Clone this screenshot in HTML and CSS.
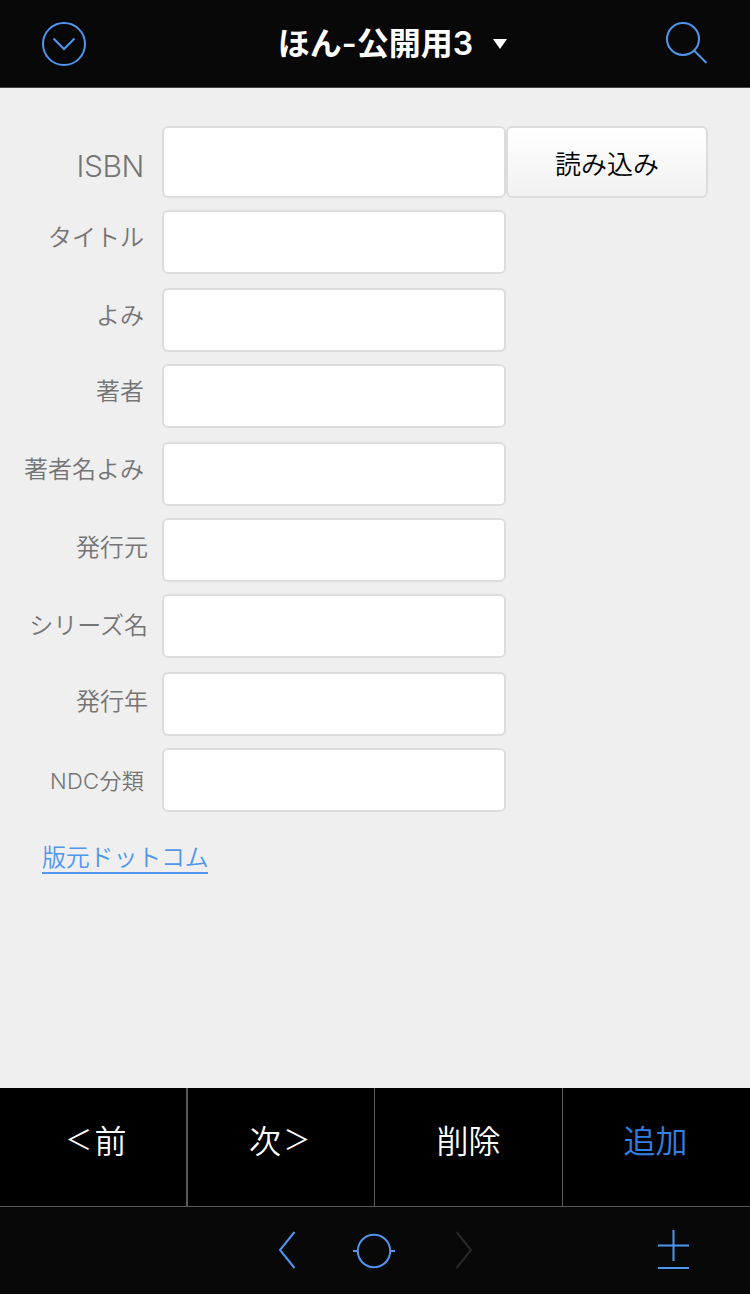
FILE: index.html
```
<!DOCTYPE html>
<html lang="ja">
<head>
    <meta charset="UTF-8">
    <meta name="viewport" content="width=device-width, initial-scale=1.0">
    <title>ほん-公開用3</title>
    <link rel="stylesheet" href="styles.css">
</head>
<body>
    <header class="header">
        <svg class="icon" width="44" height="44" viewBox="0 0 44 44">
            <circle cx="22" cy="22" r="21"/>
            <path d="M11.5 16.5 L22 27 L32.5 16.5"/>
        </svg>
        <h1 class="title">ほん-公開用3<span class="arrow"></span></h1>
        <svg class="icon" width="44" height="44" viewBox="0 0 44 44">
            <circle cx="19" cy="17" r="16"/>
            <path d="M30 28.5 L42.5 41"/>
        </svg>
    </header>

    <main class="form">
        <div class="row isbn">
            <label class="label" for="isbn">ISBN</label>
            <input type="text" id="isbn" class="field">
            <button class="load">読み込み</button>
        </div>
        <div class="row">
            <label class="label" for="bookTitle">タイトル</label>
            <input type="text" id="bookTitle" class="field">
        </div>
        <div class="row wide">
            <label class="label" for="yomi">よみ</label>
            <input type="text" id="yomi" class="field">
        </div>
        <div class="row">
            <label class="label" for="author">著者</label>
            <input type="text" id="author" class="field">
        </div>
        <div class="row wide">
            <label class="label" for="authorYomi">著者名よみ</label>
            <input type="text" id="authorYomi" class="field">
        </div>
        <div class="row shift">
            <label class="label" for="publisher">発行元</label>
            <input type="text" id="publisher" class="field">
        </div>
        <div class="row shift series">
            <label class="label" for="series">シリーズ名</label>
            <input type="text" id="series" class="field">
        </div>
        <div class="row shift wide">
            <label class="label" for="year">発行年</label>
            <input type="text" id="year" class="field">
        </div>
        <div class="row ndc">
            <label class="label" for="ndc">NDC分類</label>
            <input type="text" id="ndc" class="field">
        </div>
        <a class="link" href="#">版元ドットコム</a>
    </main>

    <div class="actions">
        <button class="action"><span class="angle">＜</span>前</button>
        <button class="action">次<span class="angle">＞</span></button>
        <button class="action">削除</button>
        <button class="action add">追加</button>
    </div>

    <footer class="toolbar">
        <svg class="icon prev" width="18" height="38" viewBox="0 0 18 38">
            <path d="M16.5 1 L2 19 L16.5 37"/>
        </svg>
        <svg class="icon record" width="42" height="36" viewBox="0 0 42 36">
            <circle cx="21" cy="18" r="16.2"/>
            <path d="M0 18 H5 M37 18 H42"/>
        </svg>
        <svg class="icon next" width="18" height="38" viewBox="0 0 18 38">
            <path d="M1.5 1 L16 19 L1.5 37"/>
        </svg>
        <svg class="icon plus" width="32" height="40" viewBox="0 0 32 40">
            <path d="M0 15.5 H31 M15.5 0 V31 M0 38 H31"/>
        </svg>
    </footer>
</body>
</html>
```
FILE: styles.css
```
* {
    box-sizing: border-box;
}
body {
    margin: 0;
    height: 1294px;
    display: flex;
    flex-direction: column;
    background: #efefef;
    font-family: Inter, "Noto Sans CJK JP", sans-serif;
    font-weight: 350;
}
button, input {
    font: inherit;
    margin: 0;
}
.icon {
    display: block;
    fill: none;
    stroke: #5096f0;
    stroke-width: 2;
}
.header {
    height: 88px;
    padding: 0 42px;
    display: flex;
    align-items: center;
    justify-content: space-between;
    background: #080808;
    border-bottom: 1px solid #454545;
}
.title {
    margin: 0;
    display: flex;
    align-items: center;
    color: #fff;
    font-size: 32px;
    font-weight: 600;
    line-height: 44px;
    padding-left: 35px;
}
.arrow {
    margin-left: 20px;
    border-left: 7px solid transparent;
    border-right: 7px solid transparent;
    border-top: 10px solid #fff;
}
.form {
    flex: 1;
    padding-top: 38px;
}
.row {
    display: flex;
    height: 64px;
    margin-bottom: 12px;
}
.wide {
    margin-top: 14px;
}
.label {
    width: 162px;
    padding-right: 18px;
    text-align: right;
    white-space: nowrap;
    color: #757575;
    font-size: 24px;
    line-height: 56px;
}
.field {
    width: 344px;
    border: 2px solid #dcdcdc;
    border-radius: 6px;
    background: #fff;
    padding: 0 10px;
    font-size: 24px;
}
.isbn {
    height: 72px;
}
.isbn .label {
    font-size: 30px;
    font-weight: 300;
    line-height: 80px;
    letter-spacing: -0.4px;
}
.shift .label {
    padding-right: 14px;
    line-height: 60px;
}
.series .label {
    line-height: 64px;
}
.ndc .label {
    font-size: 22px;
    line-height: 67px;
    letter-spacing: 0.3px;
}
.load {
    width: 202px;
    border: 2px solid #dcdcdc;
    border-radius: 6px;
    background: linear-gradient(#fff, #f1f1f1);
    color: #000;
    font-size: 26px;
    padding: 0;
}
.link {
    display: inline-block;
    margin: 19px 0 0 42px;
    width: 166px;
    height: 31px;
    line-height: 30px;
    font-size: 24px;
    letter-spacing: -0.2px;
    white-space: nowrap;
    color: #5096f0;
    text-decoration: none;
    border-bottom: 2px solid #5096f0;
}
.actions {
    display: grid;
    grid-template-columns: 188px 187px 188px 187px;
    height: 119px;
    background: #000;
    border-bottom: 1px solid #595959;
}
.action {
    display: flex;
    align-items: center;
    justify-content: center;
    border: 0;
    border-right: 1px solid #595959;
    background: #000;
    color: #fff;
    font-size: 32px;
    padding: 0 0 17px;
}
.action:first-child {
    border-right-width: 2px;
    padding-left: 3px;
}
.action.add {
    border-right: 0;
    padding-right: 2px;
    color: #3180e8;
}
.angle {
    width: 32px;
    font-size: 27px;
    text-align: center;
}
.toolbar {
    height: 87px;
    padding: 23px 60px 0 278px;
    display: flex;
    align-items: flex-start;
    background: #080808;
}
.prev {
    margin-top: 1px;
}
.record {
    margin: 3px 0 0 57px;
}
.next {
    margin: 1px 0 0 60px;
    stroke: #282828;
}
.plus {
    margin-left: auto;
}
```
